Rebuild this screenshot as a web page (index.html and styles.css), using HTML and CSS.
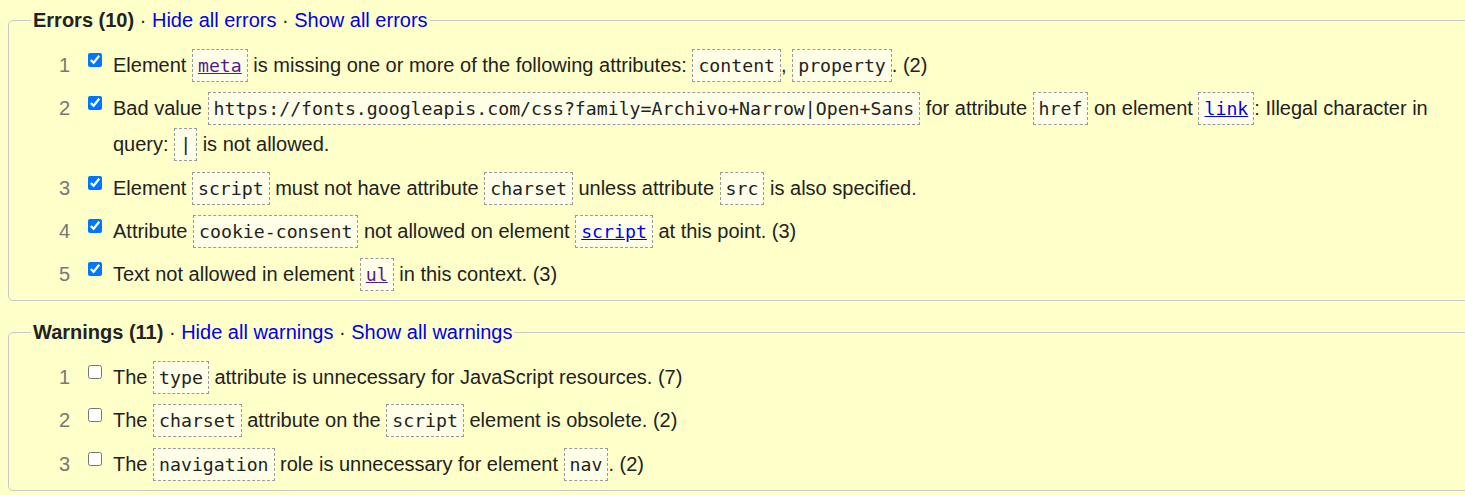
FILE: index.html
```html
<!DOCTYPE html>
<html lang="en">
<head>
<meta charset="utf-8">
<title>Messages</title>
<link rel="stylesheet" href="styles.css">
</head>
<body>
<fieldset class="group">
  <legend class="group-legend"><strong>Errors (10)</strong> · <a href="#">Hide all errors</a> · <a href="#">Show all errors</a></legend>
  <ol class="msgs">
    <li class="msg"><span class="num">1</span><input class="chk" type="checkbox" checked><span class="text">Element <code class="c"><a class="visited" href="#">meta</a></code> is missing one or more of the following attributes: <code class="c">content</code>, <code class="c">property</code>. (2)</span></li>
    <li class="msg"><span class="num">2</span><input class="chk" type="checkbox" checked><span class="text">Bad value <code class="c">https://fonts.googleapis.com/css?family=Archivo+Narrow|Open+Sans</code> for attribute <code class="c">href</code> on element <code class="c"><a href="#">link</a></code>: Illegal character in query: <code class="c">|</code> is not allowed.</span></li>
    <li class="msg"><span class="num">3</span><input class="chk" type="checkbox" checked><span class="text">Element <code class="c">script</code> must not have attribute <code class="c">charset</code> unless attribute <code class="c">src</code> is also specified.</span></li>
    <li class="msg"><span class="num">4</span><input class="chk" type="checkbox" checked><span class="text">Attribute <code class="c">cookie-consent</code> not allowed on element <code class="c"><a href="#">script</a></code> at this point. (3)</span></li>
    <li class="msg"><span class="num">5</span><input class="chk" type="checkbox" checked><span class="text">Text not allowed in element <code class="c"><a class="visited" href="#">ul</a></code> in this context. (3)</span></li>
  </ol>
</fieldset>
<fieldset class="group">
  <legend class="group-legend"><strong>Warnings (11)</strong> · <a href="#">Hide all warnings</a> · <a href="#">Show all warnings</a></legend>
  <ol class="msgs">
    <li class="msg"><span class="num">1</span><input class="chk" type="checkbox"><span class="text">The <code class="c">type</code> attribute is unnecessary for JavaScript resources. (7)</span></li>
    <li class="msg"><span class="num">2</span><input class="chk" type="checkbox"><span class="text">The <code class="c">charset</code> attribute on the <code class="c">script</code> element is obsolete. (2)</span></li>
    <li class="msg"><span class="num">3</span><input class="chk" type="checkbox"><span class="text">The <code class="c">navigation</code> role is unnecessary for element <code class="c">nav</code>. (2)</span></li>
  </ol>
</fieldset>
</body>
</html>
```
FILE: styles.css
```css
html, body {
  background: #ffffc9;
}
body {
  margin: 8px 0 0 8px;
  overflow: hidden;
  font-family: "Liberation Sans", Arial, sans-serif;
  font-size: 20px;
  color: #222;
}
a {
  color: #0000ee;
  text-decoration: none;
}
.group {
  width: 1500px;
  margin: 0 0 19px 0;
  padding: 15px 0 8px 0;
  border: 1px solid #c8c8c8;
  border-radius: 5px;
}
.group-legend {
  margin-left: 22px;
  padding: 0 2px;
  line-height: 24px;
}
.group-legend strong {
  font-weight: bold;
}
.msgs {
  list-style: none;
  margin: 0;
  padding: 0;
}
.msg {
  display: flex;
  align-items: flex-start;
  line-height: 36px;
  margin-bottom: 7.3px;
}
.msg:last-child {
  margin-bottom: 0;
}
.num {
  width: 61px;
  flex: none;
  text-align: right;
  color: #777;
}
.chk {
  flex: none;
  width: 14px;
  height: 14px;
  margin: 6px 11px 0 18px;
}
.text {
  flex: 1;
  padding-right: 70px;
}
.c {
  font-family: "DejaVu Sans Mono", monospace;
  font-size: 18.2px;
  line-height: 1;
  padding: 5px 5px;
  border: 1px dashed #9a9a9a;
  background: #ffffe8;
}
.c a {
  text-decoration: underline;
}
.c a.visited {
  color: #551a8b;
}
```
